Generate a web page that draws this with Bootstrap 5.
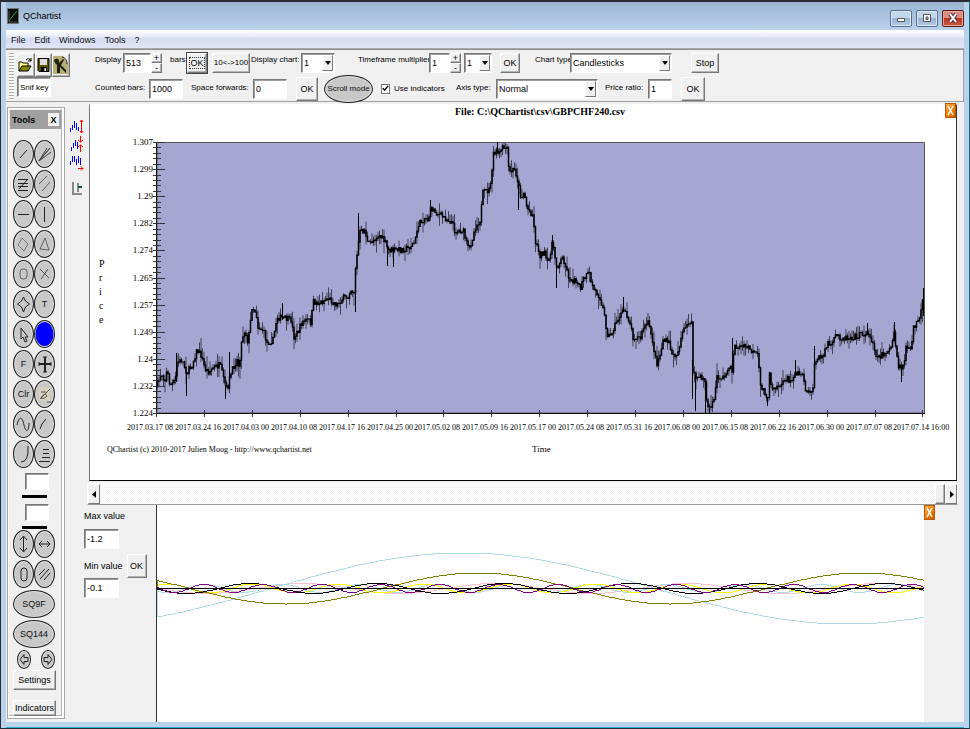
<!DOCTYPE html>
<html lang="en">
<head>
<meta charset="utf-8">
<meta name="viewport" content="width=device-width, initial-scale=1">
<title>QChartist</title>
<link href="https://cdn.jsdelivr.net/npm/bootstrap@5.3.0/dist/css/bootstrap.min.css" rel="stylesheet">
<style>
:root{--face:#f0f0f0;--ui:"Liberation Sans",Arial,sans-serif}
body{font-family:var(--ui);font-size:8px;line-height:12px;color:#000;background:#b9d1ea}
.app{min-height:100vh;padding-left:5px;padding-right:5px;border:solid #2b2b33;border-width:2px 1px 1px;border-right-color:#1b6b7c;background:#b9d1ea}
.caption{height:28px;background:linear-gradient(#9bb4d2,#b9d1ea);padding-left:1px}
.caption .title{font-size:9px}
.winbtn{width:22px;height:17px;padding:0;border:1px solid #56708f;border-radius:2px;background:linear-gradient(#c3d5ea 45%,#98b2d0 50%,#b5cce4);box-shadow:inset 0 0 0 1px #dbe7f3;display:flex;align-items:center;justify-content:center}
.winbtn.exit{background:linear-gradient(#dd8d80 45%,#b8321c 50%,#cc5a40);border-color:#5a1d1d;box-shadow:inset 0 0 0 1px #e5a79c}
.menu{height:19px;background:linear-gradient(#fff,#e4e9f6 40%,#d6dcf0 45%,#e0e6f7);font-size:9px;line-height:20px;border-bottom:1px solid #a8a8a8;gap:9px;padding-left:5px}
.menu a{color:#111;text-decoration:none}
.client{background:var(--face)}
.bars{padding-left:3px;height:53px;border-top:1px solid #8f8f8f;border-right:1px solid #a0a0a0;border-bottom:1px solid #a0a0a0;gap:3px}
.grip{width:5px;height:47px;margin-top:3px;background:repeating-linear-gradient(#aaa 0 1px,#f8f8f8 1px 3px)}
.files{width:53px;padding-top:3px}
.tb{border:1px solid;border-color:#fff #777 #777 #fff;box-shadow:inset -1px -1px #b4b4b4;background:var(--face);padding:0;color:#000;text-align:center;white-space:nowrap;font-size:9px;line-height:12px}
.files .tb{width:18px;height:24px}
.field{border:1px solid;border-color:#777 #fff #fff #777;box-shadow:inset 1px 1px #9c9c9c;background:#fff;padding:0 0 0 2px;border-radius:0;font-size:9px;line-height:12px;height:20px;color:#000;min-width:0;width:100%}
.small-text{font-size:8px}
.rows{padding-left:22px;min-width:0}
.bar{display:grid;height:25px;align-items:center;white-space:nowrap}
.bar1{grid-template-columns:28px 28px 19px 17px 25px 39px 50px 57px 71px 21px 14px 36px 35px 35px 121px 1fr}
.bar2{grid-template-columns:54px 42px 62px 43px 28px 57px 75px 40px 109px 43px 33px 1fr}
.bar label{line-height:12px;padding-bottom:6px}
.bar2 label{padding-bottom:2px}
.w20{width:20px}.w22{width:22px}.w24{width:24px}.w28{width:28px}.w34{width:34px}.w38{width:38px}.w102{width:102px}
.h16{height:16px}.h20{height:20px}.h24{height:24px}
.focused{outline:1px solid #444}
.focused span{outline:1px dotted #333}
.spin{width:11px;display:flex;flex-direction:column}
.spin button{height:10px;line-height:6px;font-size:9px}
.drop{display:flex;height:20px;border:1px solid;border-color:#777 #fff #fff #777;box-shadow:inset 1px 1px #9c9c9c;background:#fff;padding:1px}
.drop select{appearance:none;border:0;background:transparent;padding:0 0 0 1px;font-size:9px;line-height:12px;flex:1;min-width:0;color:#000}
.drop i,.arrowbtn{display:flex;align-items:center;justify-content:center;width:11px;border:1px solid;border-color:#fff #777 #777 #fff;background:var(--face);padding:0}
.drop i::after{content:"";border:3px solid transparent;border-top:4px solid #000;border-bottom:0}
.oval{border:1px solid #222;border-radius:50%;box-shadow:inset 0 0 0 1px #dedede;background:#c8c8c8;padding:0;color:#111;width:21px;height:28px;display:flex;align-items:center;justify-content:center;font-size:9px;line-height:12px;white-space:nowrap}
.oval svg{width:19px;height:26px;fill:none;stroke:#222;stroke-width:1}
.oval.wide{width:42px}
.oval.mini{width:14px;height:19px}
.oval.mini svg{width:12px;height:17px}
.oval.scroll{width:49px;height:28px;font-size:8px}
.oval.blue svg{fill:#00f;stroke:none}
.tick{width:9px;height:10px;margin:0;appearance:none;border:1px solid #777;background:#fff;border-radius:0}
.tick:checked{background:#fff url("data:image/svg+xml,%3Csvg xmlns='http://www.w3.org/2000/svg' viewBox='0 0 8 8'%3E%3Cpath d='M1 3.500l2 2.500 4-5' fill='none' stroke='%23000' stroke-width='1.600'/%3E%3C/svg%3E")}
.work{padding-top:2px}
.side{width:58px;margin:3px 0 3px 1px;border:1px solid #a6a6a6;box-shadow:inset 1px 1px #fff,inset -2px -2px #fff,inset -3px -3px #b4b4b4;padding:2px 3px 2px 2px}
.side header{background:#a0a0a0;height:19px;padding:0 2px;font-weight:bold;font-size:9px}
.side header button{width:11px;height:13px;border:0;background:var(--face);padding:0;font:bold 9px/12px var(--ui)}
.kit{display:grid;grid-template-columns:21px 21px;row-gap:2px;padding:11px 0 0 3px}
.kit.more{padding-top:0}
.squares{padding:2px 0 0 3px;gap:2px}
.slot{padding:5px 0 1px 15px}
.slot .field{width:24px;height:17px}
.slot hr{margin:5px 0 6px -3px;width:25px;border:0;height:3px;background:#000;opacity:1}
.minis{padding:2px 6px 1px 7px}
.inset-btn{margin:0 5px 0 3px}
.strip{width:24px;padding-top:13px}
.strip button{border:0;background:none;padding:0;height:18px;width:16px;display:block}
.plot{min-width:0;margin-right:7px;border-left:1px solid #777;border-top:1px solid #fff;border-bottom:1px solid #000;border-right:1px solid #333;background:#fff;position:relative}
.plot svg,.wave svg{display:block;width:100%;height:auto}
.orange{width:11px;height:15px;padding:0;border:1px solid #b8580a;background:linear-gradient(135deg,#ffb050,#ef7a00 60%,#c25c00);display:flex;align-items:center;justify-content:center}
.plot .orange{position:absolute;right:0;top:-2px}
.plot .orange svg,.orange svg{width:7px;height:11px}
.rest{margin-right:29px}
.track{height:22px;margin:2px 6px 0 22px;border:1px solid #fff;border-bottom-color:#999;background:repeating-conic-gradient(#fff 0 25%,#f1f1f1 0 50%) 0 0/2px 2px;padding:0}
.arrowbtn{width:12px}
.limits{width:91px;padding:5px 0 0 19px;font-size:9px}
.limits .field{width:35px}
.maxbox{padding:7px 0 5px}
.wave{min-width:0;border-left:1px solid #333;background:#fff}
.axis{font-family:"Liberation Serif",serif;font-size:9px}
.dates{font-size:8px}
.foot{height:6px;border-bottom:1px solid #28b0cc}
</style>
<script src="https://cdn.jsdelivr.net/npm/bootstrap@5.3.0/dist/js/bootstrap.bundle.min.js"></script>
</head>
<body>
<div class="app d-flex flex-column">
 <div class="caption d-flex align-items-center">
  <svg width="12" height="16" viewBox="0 0 12 16"><path fill="#0a0a0a" stroke="#777" d="M.5.500h11v15H.5z"/><path d="M2 13l3-4 5-6" stroke="#2fae3c" fill="none"/><path d="M2 3v11h8" stroke="#555" fill="none"/></svg>
  <span class="title ms-1 flex-grow-1">QChartist</span>
  <div class="d-flex gap-1 pt-1">
   <button class="winbtn" aria-label="Minimize"><svg width="10" height="8"><path d="M1.500 4.500h7v3h-7z" fill="#fff" stroke="#555"/></svg></button>
   <button class="winbtn" aria-label="Maximize"><svg width="10" height="10"><path d="M1.500 1.500h7v7h-7zM4 4v2.500h2V4z" fill="#fff" stroke="#555"/></svg></button>
   <button class="winbtn exit" aria-label="Close"><svg width="10" height="10"><path d="M2 1l6 8M8 1L2 9" stroke="#534" stroke-width="4"/><path d="M2 1l6 8M8 1L2 9" stroke="#fff" stroke-width="2"/></svg></button>
  </div>
 </div>
 <nav class="menu d-flex"><a href="#">File</a><a href="#">Edit</a><a href="#">Windows</a><a href="#">Tools</a><a href="#">?</a></nav>
 <div class="client flex-grow-1 d-flex flex-column">
  <div class="bars d-flex">
   <div class="grip"></div>
   <div class="files">
    <div class="d-flex">
     <button class="tb" aria-label="Open"><svg width="15" height="18" viewBox="0 0 15 18"><path d="M1 15V6h3l1 1h5v3" fill="#ff8" stroke="#000"/><path d="M1 15l3-5h9l-3 5z" fill="#880" stroke="#000"/><path d="M8 4q3-3 5 1m0-3v3h-3" fill="none" stroke="#000"/></svg></button>
     <button class="tb" aria-label="Save"><svg width="13" height="16" viewBox="0 0 13 16"><path d="M1 1.500h11v13H2l-1-1z" fill="#550" stroke="#000"/><path d="M3 2h7v6H3z" fill="#ddd"/><path d="M4 10h6v4H4z" fill="#000"/><path d="M7.500 11h1.500v3H7.500z" fill="#fff"/></svg></button>
     <button class="tb" aria-label="Snif"><svg width="16" height="20" viewBox="0 0 16 20"><path d="M0 1h10l5 8v10H0z" fill="#b8ae77"/><path d="M1 5q3-3 5 0v3l4-4 1 1-3 5 5 5v3l-6-6v6H4V10L2 8z" fill="#221"/><path d="M9 2q5 1 5 7" fill="none" stroke="#221"/></svg></button>
    </div>
    <input class="field w34 small-text" value="Snif key" aria-label="Snif key">
   </div>
   <div class="rows flex-grow-1">
    <div class="bar bar1">
     <label for="d1">Display</label><input id="d1" class="field" value="513">
     <div class="spin"><button class="tb" aria-label="More bars">+</button><button class="tb" aria-label="Fewer bars">-</button></div>
     <label for="d1">bars</label><button class="tb w20 h20 focused"><span>OK</span></button><button class="tb w38 h20 small-text">10&lt;-&gt;100</button>
     <label for="d2">Display chart:</label><div class="drop w34"><select id="d2"><option>1</option></select><i></i></div>
     <label for="d3">Timeframe multiplier:</label><input id="d3" class="field" value="1">
     <div class="spin"><button class="tb" aria-label="Increase">+</button><button class="tb" aria-label="Decrease">-</button></div>
     <div class="drop w28"><select aria-label="Multiplier"><option>1</option></select><i></i></div>
     <button class="tb w20 h20">OK</button>
     <label for="d4">Chart type:</label><div class="drop w102"><select id="d4"><option>Candlesticks</option></select><i></i></div>
     <button class="tb w28 h20">Stop</button>
    </div>
    <div class="bar bar2">
     <label for="e1">Counted bars:</label><input id="e1" class="field w34" value="1000">
     <label for="e2">Space forwards:</label><input id="e2" class="field w34" value="0">
     <button class="tb w22 h24">OK</button><button class="oval scroll">Scroll mode</button>
     <div class="d-flex align-items-center gap-1"><input type="checkbox" id="e3" class="tick" checked><label for="e3" class="pb-0">Use indicators</label></div>
     <label for="e4">Axis type:</label><div class="drop w102"><select id="e4"><option>Normal</option></select><i></i></div>
     <label for="e5">Price ratio:</label><input id="e5" class="field w24" value="1">
     <button class="tb w24 h24">OK</button>
    </div>
   </div>
  </div>
  <div class="work d-flex flex-grow-1">
   <aside class="side flex-shrink-0 d-flex flex-column">
    <header class="d-flex align-items-center justify-content-between">Tools<button aria-label="Close tools">X</button></header>
    <div class="kit">
     <button class="oval" aria-label="Line"><svg viewBox="0 0 19 26"><path d="M6 17l7-8"/></svg></button>
     <button class="oval" aria-label="Fan"><svg viewBox="0 0 19 26"><path d="M4 20L15 7M4 20L12 7M4 20L16 11M4 20L14 8" stroke="#444"/></svg></button>
     <button class="oval" aria-label="Retracement"><svg viewBox="0 0 19 26"><path d="M4 8.500h10M4 12.500h10M4 15.500h10M4 19.500h10M5 18l9-10"/></svg></button>
     <button class="oval" aria-label="Parallel lines"><svg viewBox="0 0 19 26" stroke-opacity=".6"><path d="M4 13l8-8M7 20l8-9"/></svg></button>
     <button class="oval" aria-label="Horizontal"><svg viewBox="0 0 19 26"><path d="M4 13.500h11"/></svg></button>
     <button class="oval" aria-label="Vertical"><svg viewBox="0 0 19 26"><path d="M9.500 6v15"/></svg></button>
     <button class="oval" aria-label="Diamond"><svg viewBox="0 0 19 26" stroke-opacity=".5"><path d="M8 7l6 6-4 7-6-6z"/></svg></button>
     <button class="oval" aria-label="Triangle"><svg viewBox="0 0 19 26" stroke-opacity=".6"><path d="M10 7l4 12-9-1z"/></svg></button>
     <button class="oval" aria-label="Circle"><svg viewBox="0 0 19 26" stroke-opacity=".6"><rect x="6" y="8" width="7" height="10" rx="3"/></svg></button>
     <button class="oval" aria-label="Cross"><svg viewBox="0 0 19 26" stroke-opacity=".7"><path d="M5 8l9 9M13 8l-7 10"/></svg></button>
     <button class="oval" aria-label="Star"><svg viewBox="0 0 19 26" stroke-width="1.500"><path d="M9.500 6l2 4 4 3-4 3-2 5-2-5-4-3 4-3z"/></svg></button>
     <button class="oval">T</button>
     <button class="oval" aria-label="Pointer"><svg viewBox="0 0 19 26"><path d="M7 7v11l2-2 2 5 2-1-2-4h3z"/></svg></button>
     <button class="oval blue" aria-label="Colour"><svg viewBox="0 0 19 26"><ellipse cx="9.500" cy="13" rx="9" ry="12"/></svg></button>
     <button class="oval">F</button>
     <button class="oval" aria-label="Crosshair"><svg viewBox="0 0 19 26"><path d="M4 13h12M10 6v15" stroke-width="2"/><path d="M8 6h4M8 21h4M4 11v4M16 11v4"/></svg></button>
     <button class="oval">Clr</button>
     <button class="oval" aria-label="Freehand"><svg viewBox="0 0 19 26"><path d="M4 6h11v14H4z" fill="#d8cfbd" stroke="none"/><path d="M5 18l10-10M6 17q3-6 6-2-3 4-6 2M6 11h5M12 21h4" stroke="#555"/></svg></button>
     <button class="oval" aria-label="Sine"><svg viewBox="0 0 19 26"><path d="M3 14c2-9 5-9 7 0s5 6 5-2"/></svg></button>
     <button class="oval" aria-label="Short curve"><svg viewBox="0 0 19 26"><path d="M5 18q1-5 6-10"/></svg></button>
     <button class="oval" aria-label="Arc"><svg viewBox="0 0 19 26"><path d="M14 5q1 16-7 16"/></svg></button>
     <button class="oval" aria-label="Levels"><svg viewBox="0 0 19 26"><path d="M8 8.500h6M8 12.500h6M7 16.500h8M4 20.500h11"/></svg></button>
    </div>
    <div class="slot"><input class="field" aria-label="First width"><hr><input class="field" aria-label="Second width"><hr class="mb-0"></div>
    <div class="kit more">
     <button class="oval" aria-label="Stretch vertically"><svg viewBox="0 0 19 26"><path d="M9.500 6v14M6 9l3.500-4L13 9M6 17l3.500 4 3.500-4"/></svg></button>
     <button class="oval" aria-label="Stretch horizontally"><svg viewBox="0 0 19 26" stroke-width="1.500"><path d="M4 13h11M7 10l-3 3 3 3M12 10l3 3-3 3"/></svg></button>
     <button class="oval" aria-label="Zero"><svg viewBox="0 0 19 26"><rect x="7" y="7" width="6" height="13" rx="3"/></svg></button>
     <button class="oval" aria-label="Hatch"><svg viewBox="0 0 19 26"><path d="M4 14l6-6M5 18l9-10M9 19l6-7"/></svg></button>
    </div>
    <div class="squares d-flex flex-column"><button class="oval wide">SQ9F</button><button class="oval wide">SQ144</button></div>
    <div class="minis d-flex justify-content-between">
     <button class="oval mini" aria-label="Back"><svg viewBox="0 0 12 17"><path d="M2 8.500l4-5v3h4v4H6v3z"/></svg></button>
     <button class="oval mini" aria-label="Forward"><svg viewBox="0 0 12 17"><path d="M10 8.500l-4-5v3H2v4h4v3z"/></svg></button>
    </div>
    <button class="tb h20 inset-btn">Settings</button>
    <button class="tb h16 inset-btn mt-auto">Indicators</button>
   </aside>
   <div class="flex-grow-1 d-flex flex-column rest-col">
    <div class="d-flex">
     <div class="strip flex-shrink-0 ps-1">
      <button aria-label="Expand scale"><svg width="14" height="17" fill="none" stroke="#00f"><path d="M.5 14v-4M2.500 12V7M4.500 10V3M6.500 5v7M8.500 9v4"/><path d="M11.500 2v13M10 4l1.500-2L13 4M10 13l1.500 2 1.500-2" stroke="red"/></svg></button>
      <button aria-label="Compress scale"><svg width="14" height="17" fill="none" stroke="#00f"><path d="M1.500 15v-4M3.500 12V7M5.500 10V4M7.500 6v7"/><path d="M10.500 0v6M10.500 9v7M8 4l2.500 2L13 4M8 11l2.500-2 2.500 2" stroke="red"/></svg></button>
      <button aria-label="Shift"><svg width="14" height="17" fill="none" stroke="#00f"><path d="M.5 11V7M2.500 8V2M4.500 2v6M6.500 5v6M8.500 2v7M10.500 4v7"/><path d="M8 14.500h5M11 12.500l2 2-2 2" stroke="red"/></svg></button>
      <button class="mt-2" aria-label="Dock"><svg width="14" height="17" fill="none" stroke="#888" stroke-width="2"><path d="M3 2v13M2 14h10M8 3v9"/><path d="M12 7H8" stroke="#055"/></svg></button>
     </div>
     <div class="plot flex-grow-1">
      <svg viewBox="90 105 866 375" role="img" aria-label="GBPCHF price chart">
       <path d="M157 142.500H924.500V413H157z" fill="#a6a6d3" stroke="#555"/>
       <g id="candles" stroke="#000"></g>
       <path d="M156.500 142V413.500H925" fill="none" stroke="#111"/>
       <g id="scale" class="axis"></g><g id="dates" class="axis dates"></g>
       <g class="axis">
        <text x="540" y="115" text-anchor="middle" font-weight="bold" font-size="10">File: C:\QChartist\csv\GBPCHF240.csv</text>
        <g font-size="10"><text x="99" y="267">P</text><text x="99" y="281">r</text><text x="99" y="295">i</text><text x="99" y="309">c</text><text x="99" y="323">e</text></g>
        <text x="107" y="452" class="dates">QChartist (c) 2010-2017 Julien Moog - http://www.qchartist.net</text>
        <text x="532" y="452">Time</text>
       </g>
      </svg>
      <button class="orange" aria-label="Close chart"><svg viewBox="0 0 7 11"><path d="M1 1l5 9M6 1L1 10" stroke="#fff" stroke-width="1.500"/></svg></button>
     </div>
    </div>
    <div class="track d-flex justify-content-between"><button class="arrowbtn" aria-label="Scroll left"><svg width="5" height="7"><path d="M4 0v7L0 3.500z"/></svg></button><div class="d-flex"><span class="tb px-1"></span><button class="arrowbtn" aria-label="Scroll right"><svg width="5" height="7"><path d="M1 0v7l4-3.500z"/></svg></button></div></div>
    <div class="d-flex flex-grow-1">
     <div class="limits flex-shrink-0">
      <label for="mx">Max value</label><div class="maxbox"><input id="mx" class="field" value="-1.2"></div>
      <div class="d-flex align-items-center gap-1"><label for="mn">Min value</label><button class="tb w20 h24">OK</button></div>
      <input id="mn" class="field" value="-0.1">
     </div>
     <div class="wave flex-grow-1"><svg viewBox="157 505 767 216" role="img" aria-label="Cycle indicator"><g id="waves" fill="none" shape-rendering="crispEdges"></g></svg></div>
     <button class="orange flex-shrink-0 rest" aria-label="Close indicator"><svg viewBox="0 0 7 11"><path d="M1 1l5 9M6 1L1 10" stroke="#fff" stroke-width="1.500"/></svg></button>
    </div>
   </div>
  </div>
 </div>
 <div class="foot"></div>
</div>
<script>
const NS='http://www.w3.org/2000/svg';
function add(id,tag,attrs,text){const e=document.createElementNS(NS,tag);for(const k in attrs)e.setAttribute(k,attrs[k]);if(text)e.textContent=text;document.getElementById(id).appendChild(e);}
// Price track: x,y pairs on the chart canvas
const track=[157,386,160,377,161,373,165,380,167,370,170,385,175,382,177,363,182,360,187,373,192,365,197,350,201,355,205,369,209,372,213,368,220,365,223,377,227,390,230,377,233,368,237,360,239,367,242,338,245,330,248,343,251,317,252,307,256,312,258,327,263,330,267,343,273,340,277,317,282,318,291,320,294,337,298,332,302,322,308,320,311,323,313,302,320,303,328,298,337,305,343,298,348,297,350,289,354,292,356,260,358,252,359,233,365,230,368,245,373,240,379,235,385,242,388,250,400,250,408,248,415,242,418,225,425,218,428,220,431,208,437,213,445,218,452,222,455,232,463,230,467,245,469,250,472,240,475,228,480,220,483,193,489,190,492,173,493,153,500,153,503,147,507,150,509,173,513,170,515,170,518,182,521,198,524,192,527,208,533,215,535,240,540,255,544,252,548,265,552,243,557,267,563,257,568,275,572,283,575,277,580,290,583,280,589,273,593,288,600,297,604,313,607,333,610,337,615,325,620,315,625,310,630,323,633,337,641,338,643,328,648,323,652,337,655,357,657,363,660,355,663,340,669,343,673,357,678,352,682,333,688,325,692,319,693,373,695,377,702,378,705,380,707,407,712,407,715,393,717,377,725,378,727,368,732,370,734,347,748,347,753,353,758,355,760,385,765,392,768,400,769,373,772,387,782,385,787,377,789,383,795,373,803,373,805,388,809,393,813,387,815,360,822,357,828,343,832,347,835,335,843,338,853,337,867,333,873,342,877,358,885,353,892,347,894,333,898,367,902,368,904,363,906,347,911,352,913,327,920,320,923,297];
let seed=7;const rnd=()=>(seed=(seed*16807)%2147483647)/2147483647;
let k=0,prev=386,body='',wick='';
for(let x=157.5;x<923.500;x+=1.5){
 while(k+3<track.length-1&&track[k+2]<=x)k+=2;
 const t=Math.min(1,(x-track[k])/(track[k+2]-track[k]));
 const y=track[k+1]+(track[k+3]-track[k+1])*t+(rnd()-.5)*6;
 const a=Math.max(143,Math.min(prev,y)-.5),b=Math.min(412,Math.max(prev,y)+.5);
 body+=`M${x} ${a.toFixed(1)}V${b.toFixed(1)}`;
 wick+=`M${x} ${Math.max(143,a-rnd()*rnd()*13).toFixed(1)}V${Math.min(412,b+rnd()*rnd()*13).toFixed(1)}`;
 prev=y;
}
add('candles','path',{d:body,'stroke-width':1.5});
add('candles','path',{d:wick,'stroke-width':1,'stroke-opacity':.6});
add('candles','path',{d:'M186.500 372V396M225.500 385V399M176.500 382V353M229.500 352V378M358.500 213V250M355.500 290V312M282.500 303V320M387.500 245V266M393.500 250V267M497.500 142V153M518.500 180V210M556.500 265V288M552.500 235V250M623.500 297V312M692.500 360V399M695.500 375V411M705.500 380V413M709.500 405V413M767.500 398V406M732.500 338V370M901.500 368V382M923.500 288V316M894.500 322V335M867.500 323V335M814.500 346V365M795.500 360V374M430.500 200V215'});
['1.307','1.299','1.29','1.282','1.274','1.265','1.257','1.249','1.24','1.232','1.224'].forEach((s,i)=>add('scale','text',{x:153,y:Math.round(145+27.1*i),'text-anchor':'end'},s));
let ticks='';for(let i=0;i<=50;i++){const y=Math.round(142+i*5.42)+.5;ticks+=i%5?`M153 ${y}h8`:`M153 ${y}h${i<50?12:4}`;}
const days=['03.17 08','03.24 16','04.03 00','04.10 08','04.17 16','04.25 00','05.02 08','05.09 16','05.17 00','05.24 08','05.31 16','06.08 00','06.15 08','06.22 16','06.30 00','07.07 08','07.14 16:00'];
days.forEach((s,i)=>{const x=Math.round(127+47.9*i);add('dates','text',{x:x,y:430},'2017.'+s);ticks+=`M${x+29.5} 410v7`;});
add('scale','path',{d:ticks,stroke:'#333',fill:'none'});
// Cycles: colour, period, first peak, amplitude
[['pink',192,303,5],['lightblue',77,205,4],['yellow',85.5,253,4.5],['lightblue',768,463,35.5],['olive',384,478,15.5],['black',127,250,5],['purple',59,204,4]].forEach(([c,p,x0,a])=>{
 let d='M157 588.5';for(let x=158;x<=924;x+=2)d+=`L${x} ${Math.round(588-a*Math.cos((x-x0)/p*2*Math.PI))+.5}`;
 add('waves','path',{d,stroke:c});
});
add('waves','path',{d:'M157 588.500H924',stroke:'#000'});
</script>
</body>
</html>
